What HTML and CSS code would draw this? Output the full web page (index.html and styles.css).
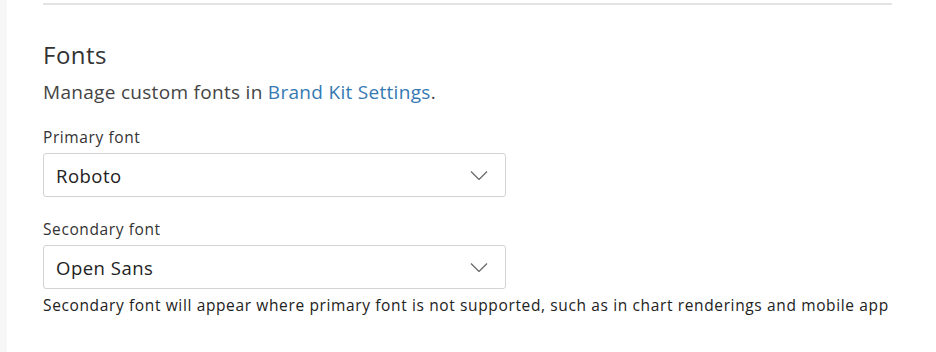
FILE: index.html
```html
<!DOCTYPE html>
<html lang="en">
<head>
  <meta charset="UTF-8">
  <title>Fonts</title>
  <link rel="stylesheet" href="styles.css">
</head>
<body>
  <div class="page">
    <div class="content">
      <hr class="divider">

      <section class="fonts-section">
        <h2 class="section-title">Fonts</h2>
        <p class="section-desc">Manage custom fonts in <a href="#">Brand Kit Settings</a>.</p>

        <div class="field">
          <label class="field-label">Primary font</label>
          <div class="select">
            <span class="select-value">Roboto</span>
            <svg class="chevron" width="18" height="9" viewBox="0 0 18 9"><path d="M1 0.5l8 8 8-8" fill="none" stroke="#6b6b6b" stroke-width="1.3"/></svg>
          </div>
        </div>

        <div class="field">
          <label class="field-label">Secondary font</label>
          <div class="select">
            <span class="select-value">Open Sans</span>
            <svg class="chevron" width="18" height="9" viewBox="0 0 18 9"><path d="M1 0.5l8 8 8-8" fill="none" stroke="#6b6b6b" stroke-width="1.3"/></svg>
          </div>
          <p class="field-help">Secondary font will appear where primary font is not supported, such as in chart renderings and mobile app</p>
        </div>
      </section>
    </div>
  </div>
</body>
</html>
```
FILE: styles.css
```css
html, body {
  margin: 0;
  padding: 0;
  background: #fff;
}

body {
  font-family: "Open Sans", "Liberation Sans", sans-serif;
  color: #333;
  height: 352px;
  overflow: hidden;
}

.page {
  height: 100%;
  border-left: 7px solid #f7f7f7;
}

.content {
  padding: 3px 44px 0 36px;
}

.divider {
  margin: 0;
  border: 0;
  border-top: 2px solid #e3e3e3;
}

.section-title {
  margin: 34px 0 0;
  font-size: 24px;
  font-weight: 400;
  line-height: 32px;
  letter-spacing: 0.5px;
}

.section-desc {
  margin: 9px 0 0;
  font-size: 19px;
  line-height: 24px;
  letter-spacing: 0.3px;
  color: #444;
}

.section-desc a {
  color: #3579b3;
  text-decoration: none;
}

.field {
  margin-top: 23px;
}

.field + .field {
  margin-top: 22px;
}

.field-label {
  display: block;
  font-size: 15.5px;
  font-weight: 500;
  line-height: 20px;
  letter-spacing: 0.6px;
  color: #333;
  margin-bottom: 6px;
}

.select {
  box-sizing: border-box;
  width: 463px;
  height: 44px;
  border: 1px solid #d3d3d3;
  border-radius: 3px;
  display: flex;
  align-items: center;
  justify-content: space-between;
  padding: 0 17px 0 12px;
  background: #fff;
}

.select-value {
  font-size: 18.5px;
  letter-spacing: 0.5px;
  color: #222;
}

.chevron {
  display: block;
}

.field-help {
  margin: 6px 0 0;
  font-size: 15.5px;
  line-height: 20px;
  letter-spacing: 0.63px;
  color: #222;
  white-space: nowrap;
}
```
